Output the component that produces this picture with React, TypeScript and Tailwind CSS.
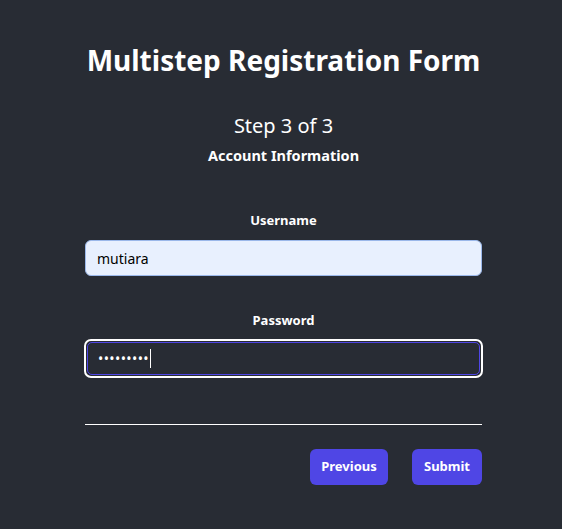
export default function App() {
  return (
    <div
      className="min-h-[529px] bg-[#282c34] text-white"
      style={{ fontFamily: '"Noto Sans", "Open Sans", sans-serif' }}
    >
      <div className="w-[397px] ml-[85px] pt-[36px]">
        <div className="flex justify-center">
          <h1 className="text-[28px] font-bold whitespace-nowrap leading-[48px]">
            Multistep Registration Form
          </h1>
        </div>

        <div className="mt-[28px] text-center">
          <h2 className="text-[20px] leading-[28px]">Step 3 of 3</h2>
          <h3 className="text-[14.5px] font-bold leading-[22px] mt-[4px]">Account Information</h3>
        </div>

        <div className="mt-[45px]">
          <label className="block text-center text-[13px] font-bold leading-[18px]">Username</label>
          <input
            type="text"
            defaultValue="mutiara"
            className="mt-[11px] block w-full h-[36px] rounded-[6px] border border-[#9bb8ea] bg-[#e8f0fe] px-[11px] text-[14px] text-black outline-none"
          />
        </div>

        <div className="mt-[35px]">
          <label className="block text-center text-[13px] font-bold leading-[18px]">Password</label>
          <div className="mt-[10px] -mx-px h-[39px] rounded-[7px] border-2 border-white p-[1px]">
            <div className="h-full rounded-[5px] border border-[#4f46e5] bg-[#282c34] flex items-center px-[10px]">
              <span className="text-[14px] tracking-[0.4px] leading-none text-white">•••••••••</span>
              <span className="ml-[1px] w-px h-[19px] bg-white"></span>
            </div>
          </div>
        </div>

        <div className="mt-[46px] h-px bg-white"></div>

        <div className="mt-[24px] flex justify-end gap-[24px]">
          <button className="h-[36px] w-[78px] rounded-[6px] bg-[#4f46e5] text-[13px] font-bold text-white">
            Previous
          </button>
          <button className="h-[36px] w-[70px] rounded-[6px] bg-[#4f46e5] text-[13px] font-bold text-white">
            Submit
          </button>
        </div>
      </div>
    </div>
  )
}
